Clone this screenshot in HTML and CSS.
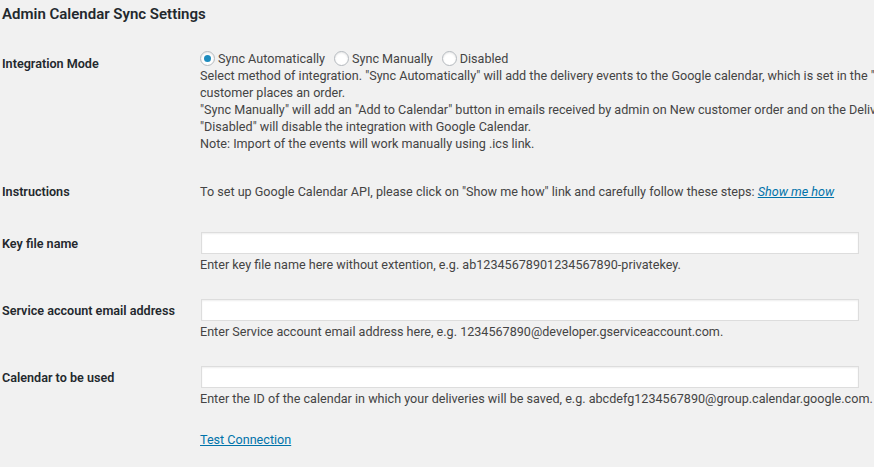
FILE: index.html
```html
<!DOCTYPE html>
<html lang="en">
<head>
<meta charset="utf-8">
<title>Admin Calendar Sync Settings</title>
<link rel="stylesheet" href="styles.css">
</head>
<body>
<div class="page">
  <h2 class="title">Admin Calendar Sync Settings</h2>
  <div class="form">
    <div class="row">
      <div class="label">Integration Mode</div>
      <div class="field">
        <div class="radios">
          <label class="radio"><span class="dot checked"></span>Sync Automatically</label>
          <label class="radio"><span class="dot"></span>Sync Manually</label>
          <label class="radio"><span class="dot"></span>Disabled</label>
        </div>
        <p class="desc">Select method of integration. "Sync Automatically" will add the delivery events to the Google calendar, which is set in the "Calendar to be used" field, when a customer places an order.<br>"Sync Manually" will add an "Add to Calendar" button in emails received by admin on New customer order and on the Delivery Calendar page.<br>"Disabled" will disable the integration with Google Calendar.<br>Note: Import of the events will work manually using .ics link.</p>
      </div>
    </div>
    <div class="row row-text">
      <div class="label">Instructions</div>
      <div class="field">
        <p class="desc">To set up Google Calendar API, please click on "Show me how" link and carefully follow these steps: <a class="link-italic" href="#">Show me how</a></p>
      </div>
    </div>
    <div class="row row-input">
      <div class="label">Key file name</div>
      <div class="field">
        <input class="input" type="text">
        <p class="desc hint">Enter key file name here without extention, e.g. ab12345678901234567890-privatekey.</p>
      </div>
    </div>
    <div class="row row-input">
      <div class="label">Service account email address</div>
      <div class="field">
        <input class="input" type="text">
        <p class="desc hint">Enter Service account email address here, e.g. 1234567890@developer.gserviceaccount.com.</p>
      </div>
    </div>
    <div class="row row-input">
      <div class="label">Calendar to be used</div>
      <div class="field">
        <input class="input" type="text">
        <p class="desc hint">Enter the ID of the calendar in which your deliveries will be saved, e.g. abcdefg1234567890@group.calendar.google.com.</p>
      </div>
    </div>
    <div class="row row-text">
      <div class="label"></div>
      <div class="field">
        <p class="desc"><a class="link" href="#">Test Connection</a></p>
      </div>
    </div>
  </div>
</div>
</body>
</html>
```

FILE: styles.css
```css
html {
  overflow: hidden;
  background: #f1f1f1;
}
body {
  margin: 0;
  background: #f1f1f1;
  font-family: Roboto, "Liberation Sans", Arial, sans-serif;
  font-size: 12.6px;
  color: #444;
}
.page {
  width: 1200px;
  padding-left: 2px;
}
.title {
  margin: 4px 0 0;
  font-size: 15px;
  line-height: 20px;
  font-weight: 600;
  color: #23282d;
}
.form {
  margin-top: 10px;
}
.row {
  display: grid;
  grid-template-columns: 198px 910px;
}
.label {
  padding-top: 21px;
  font-weight: 600;
  color: #23282d;
  line-height: 17px;
}
.field {
  padding: 15px 0 15px 0;
}
.row-text .label {
  padding-top: 16px;
}
.row-text .field {
  padding: 16px 0 14px 0;
}
.row-input .field {
  padding: 18px 0 8px 0;
}
.radios {
  display: flex;
  align-items: center;
  height: 18px;
  gap: 9px;
}
.radio {
  display: flex;
  align-items: center;
  line-height: 17px;
}
.dot {
  box-sizing: border-box;
  width: 15px;
  height: 15px;
  border: 1px solid #b4b9be;
  border-radius: 50%;
  background: #fff;
  box-shadow: inset 0 1px 2px rgba(0, 0, 0, 0.1);
  margin-right: 3px;
  display: flex;
  align-items: center;
  justify-content: center;
}
.dot.checked::after {
  content: "";
  width: 7px;
  height: 7px;
  border-radius: 50%;
  background: #1e8cbe;
}
.desc {
  margin: 0;
  line-height: 17px;
}
.hint {
  margin-top: 2px;
}
.input {
  display: block;
  box-sizing: border-box;
  width: 658px;
  height: 22px;
  margin: 0 0 0 1px;
  border: 1px solid #ddd;
  background: #fff;
  box-shadow: inset 0 1px 2px rgba(0, 0, 0, 0.07);
  padding: 0 4px;
  font: inherit;
}
.link {
  color: #0073aa;
  text-decoration: underline;
}
.link-italic {
  color: #0073aa;
  font-style: italic;
  text-decoration: underline;
}
```
